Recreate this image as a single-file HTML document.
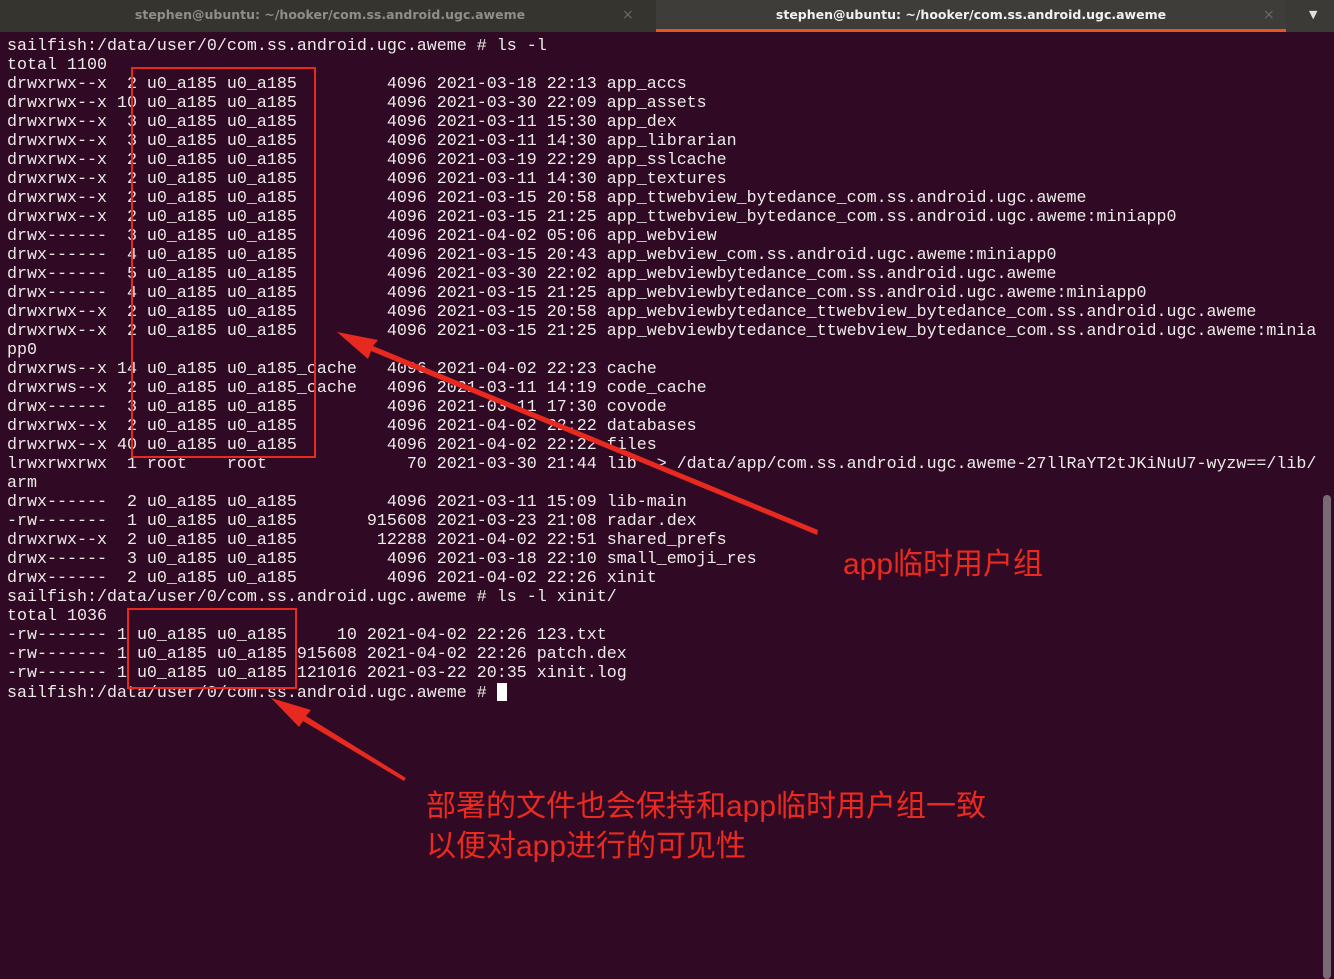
<!DOCTYPE html>
<html><head><meta charset="utf-8"><style>
*{margin:0;padding:0}
body{width:1334px;height:979px;background:#300a24;overflow:hidden;position:relative;font-family:"Liberation Mono",monospace}
#bar{position:absolute;left:0;top:0;width:1334px;height:32px;background:#3b3a36}
.tab{position:absolute;top:0;height:32px;line-height:30px;font-family:"DejaVu Sans","Liberation Sans",sans-serif;font-size:12.5px;font-weight:bold;text-align:center}
#t1{left:0;width:660px;color:#8f8e89;background:#35342f}
#t2{left:656px;width:630px;color:#f2f1ef;background:#3e3d39;border-bottom:3px solid #e95420;box-sizing:border-box}
.x{position:absolute;top:0;color:#6a6965;font-size:14px;line-height:30px;font-family:"DejaVu Sans",sans-serif}
pre{position:absolute;left:7px;top:37px;font-size:16.67px;line-height:19px;color:#ecebe8;font-family:"Liberation Mono",monospace;letter-spacing:0}
.box{position:absolute;border:2px solid #e8291f}
.lab{position:absolute;color:#ea2a1f;font-family:"Liberation Sans","Noto Sans CJK SC",sans-serif;font-size:30px;line-height:40px;white-space:nowrap}
#sb{position:absolute;left:1323px;top:495px;width:8px;height:484px;background:#7a6a74;border-radius:4px}
.cur{display:inline-block;width:10px;height:18px;background:#fff;vertical-align:-4px}
</style></head><body>
<div id="bar">
<div class="tab" id="t1">stephen@ubuntu: ~/hooker/com.ss.android.ugc.aweme</div>
<div class="tab" id="t2">stephen@ubuntu: ~/hooker/com.ss.android.ugc.aweme</div>
<div class="x" style="left:622px">×</div>
<div class="x" style="left:1263px">×</div>
<div class="x" style="left:1309px;color:#e0e0e0;font-size:11px">▼</div>
</div>
<pre>sailfish:/data/user/0/com.ss.android.ugc.aweme # ls -l
total 1100
drwxrwx--x  2 u0_a185 u0_a185         4096 2021-03-18 22:13 app_accs
drwxrwx--x 10 u0_a185 u0_a185         4096 2021-03-30 22:09 app_assets
drwxrwx--x  3 u0_a185 u0_a185         4096 2021-03-11 15:30 app_dex
drwxrwx--x  3 u0_a185 u0_a185         4096 2021-03-11 14:30 app_librarian
drwxrwx--x  2 u0_a185 u0_a185         4096 2021-03-19 22:29 app_sslcache
drwxrwx--x  2 u0_a185 u0_a185         4096 2021-03-11 14:30 app_textures
drwxrwx--x  2 u0_a185 u0_a185         4096 2021-03-15 20:58 app_ttwebview_bytedance_com.ss.android.ugc.aweme
drwxrwx--x  2 u0_a185 u0_a185         4096 2021-03-15 21:25 app_ttwebview_bytedance_com.ss.android.ugc.aweme:miniapp0
drwx------  3 u0_a185 u0_a185         4096 2021-04-02 05:06 app_webview
drwx------  4 u0_a185 u0_a185         4096 2021-03-15 20:43 app_webview_com.ss.android.ugc.aweme:miniapp0
drwx------  5 u0_a185 u0_a185         4096 2021-03-30 22:02 app_webviewbytedance_com.ss.android.ugc.aweme
drwx------  4 u0_a185 u0_a185         4096 2021-03-15 21:25 app_webviewbytedance_com.ss.android.ugc.aweme:miniapp0
drwxrwx--x  2 u0_a185 u0_a185         4096 2021-03-15 20:58 app_webviewbytedance_ttwebview_bytedance_com.ss.android.ugc.aweme
drwxrwx--x  2 u0_a185 u0_a185         4096 2021-03-15 21:25 app_webviewbytedance_ttwebview_bytedance_com.ss.android.ugc.aweme:minia
pp0
drwxrws--x 14 u0_a185 u0_a185_cache   4096 2021-04-02 22:23 cache
drwxrws--x  2 u0_a185 u0_a185_cache   4096 2021-03-11 14:19 code_cache
drwx------  3 u0_a185 u0_a185         4096 2021-03-11 17:30 covode
drwxrwx--x  2 u0_a185 u0_a185         4096 2021-04-02 22:22 databases
drwxrwx--x 40 u0_a185 u0_a185         4096 2021-04-02 22:22 files
lrwxrwxrwx  1 root    root              70 2021-03-30 21:44 lib -> /data/app/com.ss.android.ugc.aweme-27llRaYT2tJKiNuU7-wyzw==/lib/
arm
drwx------  2 u0_a185 u0_a185         4096 2021-03-11 15:09 lib-main
-rw-------  1 u0_a185 u0_a185       915608 2021-03-23 21:08 radar.dex
drwxrwx--x  2 u0_a185 u0_a185        12288 2021-04-02 22:51 shared_prefs
drwx------  3 u0_a185 u0_a185         4096 2021-03-18 22:10 small_emoji_res
drwx------  2 u0_a185 u0_a185         4096 2021-04-02 22:26 xinit
sailfish:/data/user/0/com.ss.android.ugc.aweme # ls -l xinit/
total 1036
-rw------- 1 u0_a185 u0_a185     10 2021-04-02 22:26 123.txt
-rw------- 1 u0_a185 u0_a185 915608 2021-04-02 22:26 patch.dex
-rw------- 1 u0_a185 u0_a185 121016 2021-03-22 20:35 xinit.log
sailfish:/data/user/0/com.ss.android.ugc.aweme # <span class="cur"></span></pre>
<div class="box" style="left:131px;top:67px;width:181px;height:387px"></div>
<div class="box" style="left:127px;top:608px;width:166px;height:77px"></div>
<svg style="position:absolute;left:0;top:0" width="1334" height="979">
<polygon points="337,332 378,340 373,346 818,530 817,535 371,351 368,359" fill="#e8291f"/>
<polygon points="271,698 311,710 306,716 406,778 404,781 303,721 299,727" fill="#e8291f"/>
</svg>
<div class="lab" style="left:843px;top:545px">app临时用户组</div>
<div class="lab" style="left:426px;top:787px">部署的文件也会保持和app临时用户组一致</div>
<div class="lab" style="left:426px;top:827px">以便对app进行的可见性</div>
<div id="sb"></div>
</body></html>
